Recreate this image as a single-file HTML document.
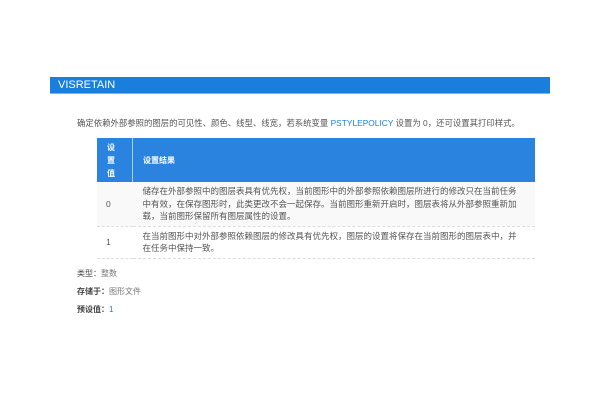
<!DOCTYPE html>
<html><head><meta charset="utf-8"><style>
body{margin:0;width:600px;height:400px;background:#fff;font-family:"Liberation Sans","Noto Sans CJK SC",sans-serif;color:#444;position:relative;overflow:hidden}
.h{position:absolute;left:50px;top:77px;width:500px;height:17px;background:#1a7edc;color:#fff;font-size:11px;line-height:17px;box-sizing:border-box;padding-left:8px;border-bottom:1px solid #7ab4ea}
.d{position:absolute;left:77px;top:117px;font-size:8.4px;color:#555;white-space:nowrap}
.d span{color:#1a7edc}
table{position:absolute;left:97px;top:138px;width:438px;border-collapse:collapse;font-size:8.5px}
th{background:#2a83de;color:#fff;text-align:left;font-weight:bold;height:44px;padding:0 0 0 10px;line-height:13px;border-right:1px solid #a9cef3;font-size:8px}
th:first-child{width:25px;padding-left:10px}
td{padding:3px 16px 3px 10px;line-height:12.5px;color:#555;border-bottom:1px dashed #ddd;vertical-align:middle}
td:first-child{padding-left:9px;padding-right:10px}
tr.a td{background:#f9f9f9}
.m{position:absolute;left:77px;font-size:8px;color:#444}
.m span{color:#777}.m b{font-weight:bold;color:#444}
</style></head><body>
<div class="h">VISRETAIN</div>
<div class="d">确定依赖外部参照的图层的可见性、颜色、线型、线宽，若系统变量 <span>PSTYLEPOLICY</span> 设置为 0，还可设置其打印样式。</div>
<table>
<tr><th>设<br>置<br>值</th><th style="border-right:none">设置结果</th></tr>
<tr class="a"><td>0</td><td>储存在外部参照中的图层表具有优先权，当前图形中的外部参照依赖图层所进行的修改只在当前任务中有效，在保存图形时，此类更改不会一起保存。当前图形重新开启时，图层表将从外部参照重新加载，当前图形保留所有图层属性的设置。</td></tr>
<tr><td>1</td><td>在当前图形中对外部参照依赖图层的修改具有优先权，图层的设置将保存在当前图形的图层表中，并在任务中保持一致。</td></tr>
</table>
<div class="m" style="top:268px">类型：<span>整数</span></div>
<div class="m" style="top:286px"><b>存储于：</b><span>图形文件</span></div>
<div class="m" style="top:304px"><b>预设值：</b><span style="color:#1a7edc">1</span></div>
</body></html>
